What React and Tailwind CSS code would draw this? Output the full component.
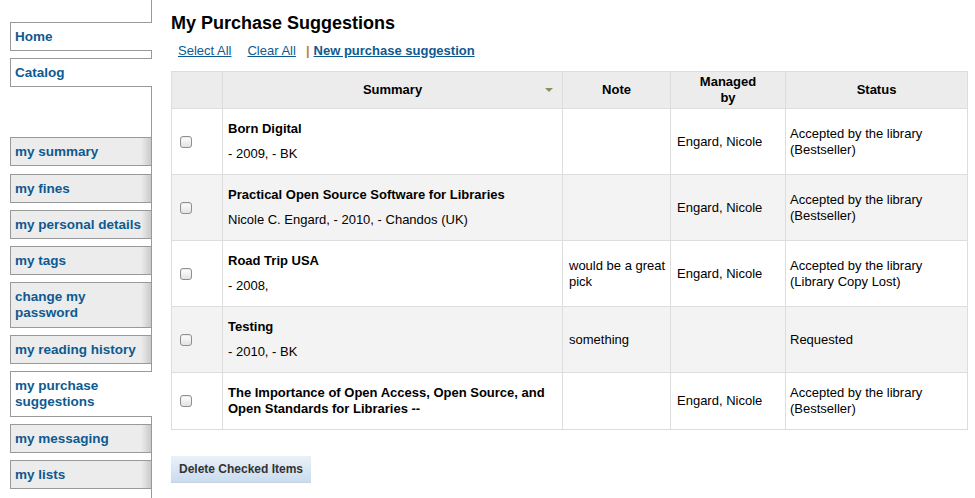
const SIDE_TOP = [
  { label: 'Home' },
  { label: 'Catalog' },
];

const SIDE_TABS = [
  { label: 'my summary' },
  { label: 'my fines' },
  { label: 'my personal details' },
  { label: 'my tags' },
  { label: 'change my password', tall: true },
  { label: 'my reading history' },
  { label: 'my purchase suggestions', tall: true, active: true },
  { label: 'my messaging' },
  { label: 'my lists' },
];

const ROWS = [
  { title: 'Born Digital', sub: '- 2009, - BK', note: '', by: 'Engard, Nicole', status: 'Accepted by the library (Bestseller)' },
  { title: 'Practical Open Source Software for Libraries', sub: 'Nicole C. Engard, - 2010, - Chandos (UK)', note: '', by: 'Engard, Nicole', status: 'Accepted by the library (Bestseller)' },
  { title: 'Road Trip USA', sub: '- 2008,', note: 'would be a great pick', by: 'Engard, Nicole', status: 'Accepted by the library (Library Copy Lost)' },
  { title: 'Testing', sub: '- 2010, - BK', note: 'something', by: '', status: 'Requested' },
  { title: 'The Importance of Open Access, Open Source, and Open Standards for Libraries --', sub: null, note: '', by: 'Engard, Nicole', status: 'Accepted by the library (Bestseller)' },
];

function Gap({ h }) {
  return <div className={`w-[152px] border-r border-[#999] ${h}`} />;
}

function Tab({ label, active, tall }) {
  // the selected tab opens onto the content, so no right border and no shading
  return (
    <div
      className={`ml-[10px] w-[142px] border-y border-l border-[#999] pl-[4px] text-[13.5px] font-bold leading-[16px] text-[#0e5a90] ${
        tall ? 'py-[6px]' : 'flex h-[29px] items-center'
      } ${
        active
          ? 'bg-white'
          : 'border-r bg-[linear-gradient(to_right,#ececec_0%,#ececec_93%,#c9c9c9_100%)]'
      }`}
    >
      {tall ? <div className="w-[100px]">{label}</div> : label}
    </div>
  );
}

function Checkbox() {
  return (
    <span className="block h-[12px] w-[12px] rounded-[3px] border border-[#8f8f8f] bg-gradient-to-b from-white to-[#e3e3e3] shadow-[inset_0_1px_1px_rgba(0,0,0,0.08)]" />
  );
}

export default function App() {
  return (
    <div className="flex min-h-[498px] bg-white font-['Liberation_Sans',Arial,sans-serif] text-[13px] text-black">
      <aside className="flex w-[152px] shrink-0 flex-col">
        <Gap h="h-[22px]" />
        <Tab label={SIDE_TOP[0].label} active />
        <Gap h="h-[7px]" />
        <Tab label={SIDE_TOP[1].label} active />
        <Gap h="h-[50px]" />
        {SIDE_TABS.map((tab, i) => (
          <div key={tab.label}>
            <Tab {...tab} />
            <Gap h={i === SIDE_TABS.length - 1 ? 'h-[20px]' : i === 0 ? 'h-[8px]' : 'h-[7px]'} />
          </div>
        ))}
      </aside>

      <main className="flex-1 pl-[19px] pr-[8px] pt-[12px]">
        <h1 className="text-[18px] font-bold leading-[22px]">My Purchase Suggestions</h1>

        <div className="mt-[9px] flex items-center pl-[7px] leading-[16px] text-[#0e5a90]">
          <a href="#" className="underline">Select All</a>
          <a href="#" className="ml-[16px] underline">Clear All</a>
          <span className="ml-[10px] font-bold text-[#c8841d]">|</span>
          <a href="#" className="ml-[4px] font-bold underline">New purchase suggestion</a>
        </div>

        <table className="mt-[12px] w-[796px] table-fixed border-collapse border border-[#ddd]">
          <colgroup>
            <col className="w-[51px]" />
            <col className="w-[340px]" />
            <col className="w-[108px]" />
            <col className="w-[115px]" />
            <col className="w-[182px]" />
          </colgroup>
          <thead>
            <tr className="bg-[#ececec] text-[13px] font-bold leading-[16px]">
              <th className="border border-[#ddd] py-[2px]" />
              <th className="relative border border-[#ddd] py-[2px]">
                Summary
                <span className="absolute right-[9px] top-[16px] h-0 w-0 border-x-[4px] border-t-[4px] border-x-transparent border-t-[#8b9158]" />
              </th>
              <th className="border border-[#ddd] py-[2px]">Note</th>
              <th className="border border-[#ddd] px-[20px] py-[2px]">Managed by</th>
              <th className="border border-[#ddd] py-[2px]">Status</th>
            </tr>
          </thead>
          <tbody>
            {ROWS.map((row, i) => (
              <tr key={row.title} className={`leading-[16px] ${i % 2 === 1 ? 'bg-[#f3f3f3]' : 'bg-white'}`}>
                <td className="border border-[#ddd] py-[12px] pl-[8px] align-middle">
                  <Checkbox />
                </td>
                <td className="border border-[#ddd] py-[12px] pl-[5px] pr-[6px] align-middle">
                  <div className="font-bold">{row.title}</div>
                  {row.sub !== null && <div className="mt-[9px]">{row.sub}</div>}
                </td>
                <td className="border border-[#ddd] py-[12px] pl-[6px] pr-[2px] align-middle">{row.note}</td>
                <td className="border border-[#ddd] py-[12px] pl-[6px] align-middle">{row.by}</td>
                <td className="border border-[#ddd] py-[12px] pl-[4px] pr-[6px] align-middle">{row.status}</td>
              </tr>
            ))}
          </tbody>
        </table>

        <button
          type="button"
          className="mt-[26px] h-[27px] w-[140px] border-b border-[#c7d3de] bg-gradient-to-b from-[#eaf1f8] to-[#c9dcef] text-[12px] font-bold text-[#333]"
        >
          Delete Checked Items
        </button>
      </main>
    </div>
  );
}
